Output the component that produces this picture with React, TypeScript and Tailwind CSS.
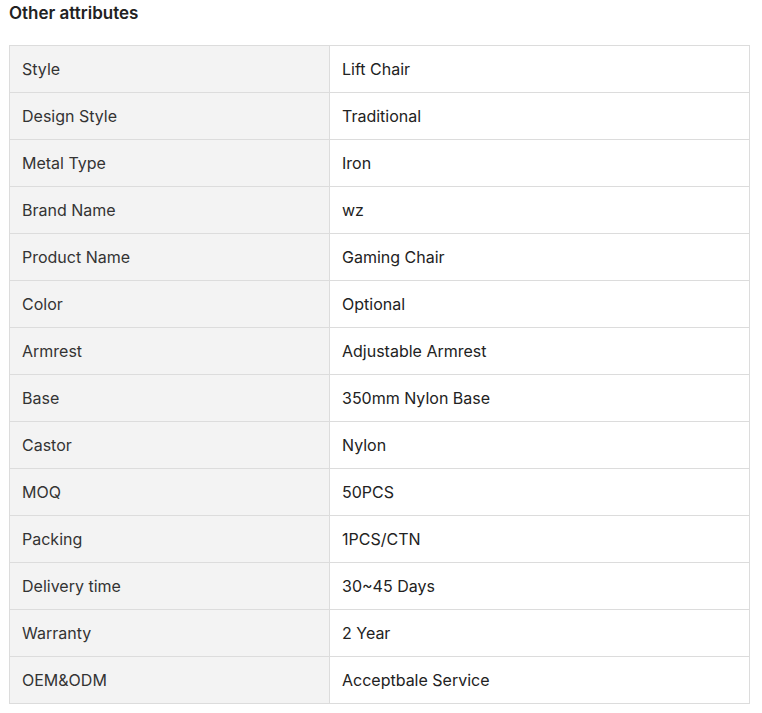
import React from "react";

const rows: [string, string][] = [
  ["Style", "Lift Chair"],
  ["Design Style", "Traditional"],
  ["Metal Type", "Iron"],
  ["Brand Name", "wz"],
  ["Product Name", "Gaming Chair"],
  ["Color", "Optional"],
  ["Armrest", "Adjustable Armrest"],
  ["Base", "350mm Nylon Base"],
  ["Castor", "Nylon"],
  ["MOQ", "50PCS"],
  ["Packing", "1PCS/CTN"],
  ["Delivery time", "30~45 Days"],
  ["Warranty", "2 Year"],
  ["OEM&ODM", "Acceptbale Service"],
];

export default function App() {
  return (
    <div className="bg-white w-[762px] h-[713px] pl-[9px] text-[#222222]" style={{ fontFamily: "Inter, 'Noto Sans', sans-serif" }}>
      <div className="text-[17px] font-semibold leading-[22px] h-[45px] pt-[2px]">Other attributes</div>
      <table className="border-collapse w-[741px] table-fixed">
        <colgroup>
          <col className="w-[320px]" />
          <col />
        </colgroup>
        <tbody>
          {rows.map(([k, v]) => (
            <tr key={k} className="h-[47px]">
              <td className="border border-[#dcdcdc] bg-[#f3f3f3] px-[12px] text-[16px] text-[#333333] leading-[20px] align-middle">{k}</td>
              <td className="border border-[#dcdcdc] bg-white px-[12px] text-[16px] text-[#222222] leading-[20px] align-middle">{v}</td>
            </tr>
          ))}
        </tbody>
      </table>
    </div>
  );
}
